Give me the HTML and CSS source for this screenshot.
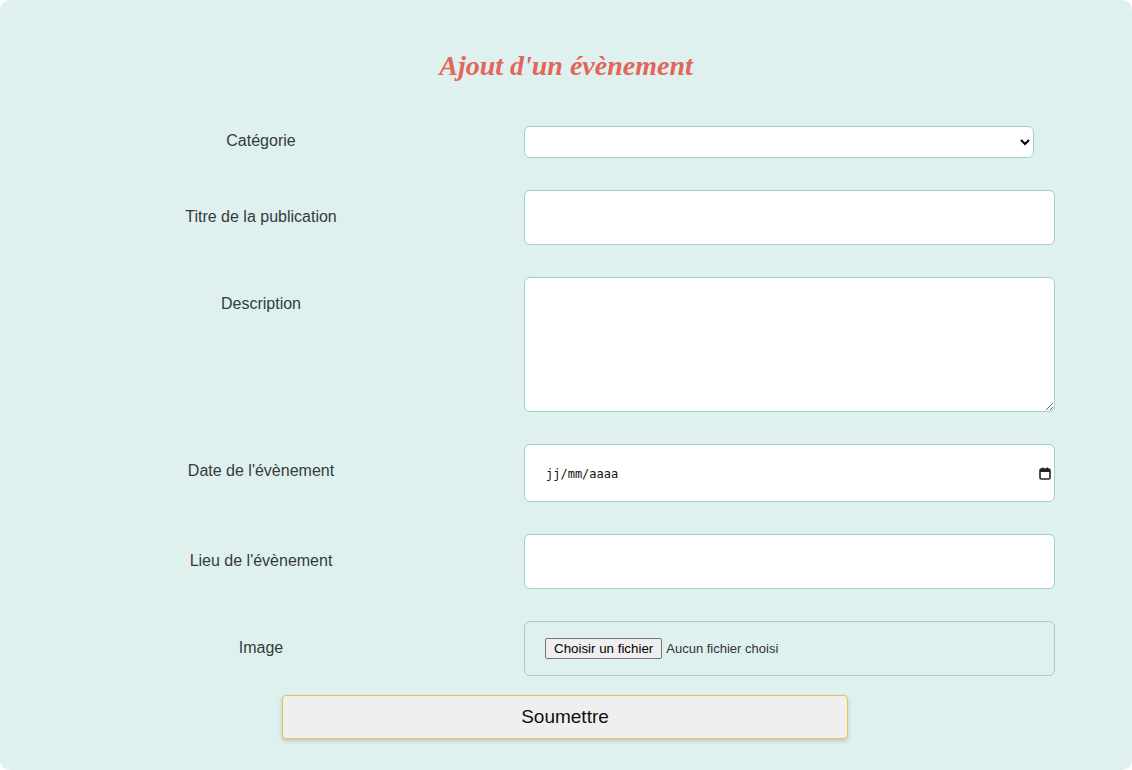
FILE: index.html
```html
<!DOCTYPE html>
<html lang="fr">
<head>
<meta charset="utf-8">
<title>Ajout d'un évènement</title>
<link rel="stylesheet" href="styles.css">
</head>
<body>
<div class="page">
  <h1 class="title">Ajout d'un évènement</h1>
  <form class="form">
    <div class="row row-select">
      <label class="label" for="cat">Catégorie</label>
      <select id="cat" class="select"><option></option></select>
    </div>
    <div class="row">
      <label class="label" for="titre">Titre de la publication</label>
      <input id="titre" class="input" type="text">
    </div>
    <div class="row">
      <label class="label" for="desc">Description</label>
      <textarea id="desc" class="textarea"></textarea>
    </div>
    <div class="row">
      <label class="label">Date de l'évènement</label>
      <div class="input date">
        <span class="date-text">jj/mm/aaaa</span>
        <svg class="cal" width="12" height="13" viewBox="0 0 12 13"><rect x="1" y="2" width="10" height="10" rx="1.5" fill="none" stroke="#222" stroke-width="1.6"/><rect x="1" y="2" width="10" height="3" fill="#222"/><rect x="3" y="0.5" width="1.4" height="2.5" fill="#222"/><rect x="7.6" y="0.5" width="1.4" height="2.5" fill="#222"/></svg>
      </div>
    </div>
    <div class="row">
      <label class="label" for="lieu">Lieu de l'évènement</label>
      <input id="lieu" class="input" type="text">
    </div>
    <div class="row row-last">
      <label class="label">Image</label>
      <div class="input file">
        <span class="file-btn">Choisir un fichier</span>
        <span class="file-text">Aucun fichier choisi</span>
      </div>
    </div>
    <div class="submit-wrap">
      <button type="button" class="submit">Soumettre</button>
    </div>
  </form>
</div>
</body>
</html>
```

FILE: styles.css
```css
html, body {
  margin: 0;
  padding: 0;
  background: #ffffff;
}
.page {
  box-sizing: border-box;
  width: 1132px;
  height: 770px;
  background: #dff1ef;
  border-radius: 10px;
  padding-top: 49px;
  font-family: "Liberation Sans", Arial, sans-serif;
}
.title {
  margin: 0 0 43px;
  text-align: center;
  font-family: "Liberation Serif", "Times New Roman", serif;
  font-style: italic;
  font-weight: bold;
  font-size: 28px;
  line-height: 34px;
  color: #e2665a;
}
.form {
  display: flex;
  flex-direction: column;
}
.row {
  display: grid;
  grid-template-columns: 524px 531px;
  align-items: start;
  margin-bottom: 32px;
}
.row-last {
  margin-bottom: 19px;
}
.label {
  text-align: center;
  font-size: 16px;
  line-height: 18px;
  color: #333b3b;
  padding-top: 18px;
  padding-right: 2px;
}
.row-select .label {
  padding-top: 6px;
}
.select {
  box-sizing: border-box;
  width: 510px;
  height: 32px;
  border: 1px solid #9fcfd0;
  border-radius: 6px;
  background: #ffffff;
  font-family: "Liberation Sans", Arial, sans-serif;
  font-size: 14px;
  padding: 0 4px;
}
.input {
  box-sizing: border-box;
  width: 531px;
  height: 55px;
  border: 1px solid #9fcfd0;
  border-radius: 6px;
  background: #ffffff;
  font-family: "Liberation Sans", Arial, sans-serif;
  font-size: 14px;
  padding: 0 20px;
  margin: 0;
}
.textarea {
  box-sizing: border-box;
  width: 531px;
  height: 135px;
  border: 1px solid #9fcfd0;
  border-radius: 6px;
  background: #ffffff;
  margin: 0;
  padding: 10px 20px;
  font-family: "Liberation Sans", Arial, sans-serif;
  font-size: 14px;
}
.date {
  height: 58px;
  display: flex;
  align-items: center;
  justify-content: space-between;
  padding: 0 3px 0 21px;
}
.date-text {
  font-family: "DejaVu Sans Mono", "Liberation Mono", monospace;
  font-size: 12px;
  color: #111;
  padding-top: 2px;
}
.cal {
  display: block;
}
.file {
  background: transparent;
  display: flex;
  align-items: center;
  gap: 4px;
  padding-bottom: 1px;
}
.file-btn {
  box-sizing: border-box;
  height: 21px;
  padding: 0 8px;
  display: flex;
  align-items: center;
  background: #efefef;
  border: 1px solid #767676;
  border-radius: 2px;
  font-size: 13.33px;
  color: #000;
}
.file-text {
  font-size: 13px;
  color: #333;
}
.submit-wrap {
  display: flex;
  justify-content: center;
}
.submit {
  box-sizing: border-box;
  width: 566px;
  height: 44px;
  background: #efefef;
  border: 1px solid #e6c453;
  border-radius: 4px;
  box-shadow: 0 2px 4px rgba(0, 0, 0, 0.18);
  font-family: "Liberation Sans", Arial, sans-serif;
  font-size: 19px;
  color: #111;
  margin-left: -2px;
}
```
